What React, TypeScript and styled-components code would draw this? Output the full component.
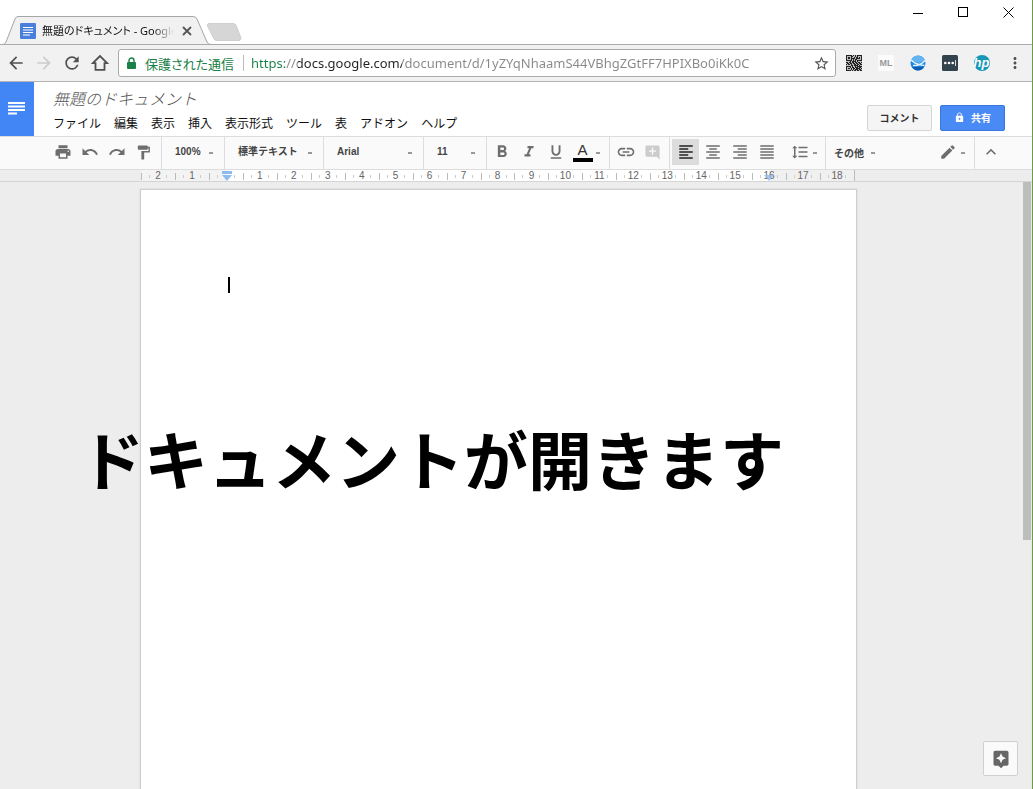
import React from "react";
import styled, { createGlobalStyle, css } from "styled-components";
import {
  MdAddComment,
  MdArrowBack,
  MdArrowForward,
  MdAssistant,
  MdEdit,
  MdFormatAlignCenter,
  MdFormatAlignJustify,
  MdFormatAlignLeft,
  MdFormatAlignRight,
  MdFormatBold,
  MdFormatItalic,
  MdFormatLineSpacing,
  MdFormatPaint,
  MdFormatUnderlined,
  MdKeyboardArrowUp,
  MdLink,
  MdLock,
  MdMoreVert,
  MdPrint,
  MdRedo,
  MdRefresh,
  MdStarBorder,
  MdUndo,
} from "react-icons/md";

const GlobalStyle = createGlobalStyle`
  *, *::before, *::after { box-sizing: border-box; }
  body {
    margin: 0;
    background: #fff;
    color: #111;
    font-family: "Liberation Sans", "Noto Sans CJK JP", sans-serif;
    font-size: 12px;
  }
  button, input, select { font: inherit; color: inherit; padding: 0; margin: 0; border: 0; background: none; }
  svg { display: block; flex: none; }
`;

const Window = styled.div`
  display: flex;
  flex-direction: column;
  min-height: 100vh;
  border-right: 1px solid #6f9a4c;
  overflow: hidden;
`;

/* ---------- browser chrome ---------- */

const TabStrip = styled.header`
  display: flex;
  align-items: flex-end;
  height: 45px;
  border-bottom: 1px solid #aaa;
`;

const Tab = styled.div`
  position: relative;
  display: flex;
  align-items: center;
  gap: 6px;
  width: 211px;
  height: 29px;
  margin-bottom: -1px;
  padding: 0 17px 0 20px;
`;

const TabShape = styled.svg`
  position: absolute;
  inset: 0;
  z-index: -1;
`;

const TabTitle = styled.span`
  flex: 1;
  min-width: 0;
  white-space: nowrap;
  font-family: "Noto Sans", "Noto Sans CJK JP", sans-serif;
  font-size: 11px;
  font-feature-settings: "palt";
  line-height: 20px;
  mask-image: linear-gradient(to right, #000 84%, transparent);
`;

const NewTab = styled.button`
  display: flex;
  margin-bottom: 3px;
  margin-left: -4px;
`;

const PlainButton = styled.button`
  display: flex;
  align-items: center;
  justify-content: center;
`;

const WindowButtons = styled.div`
  display: flex;
  align-self: flex-start;
  margin-left: auto;
  padding-right: 1px;
`;

const WindowButton = styled(PlainButton)`
  width: 45px;
  height: 24px;
`;

const AddressRow = styled.div`
  display: flex;
  align-items: center;
  height: 37px;
  padding: 0 8px 0 2px;
  background: #f1f1f1;
  border-bottom: 1px solid #b4b4b4;
`;

const NavButton = styled(PlainButton)<{ $dim?: boolean }>`
  width: 28px;
  height: 28px;
  color: ${(p) => (p.$dim ? "#ccc" : "#505050")};
`;

const Omnibox = styled.div`
  display: flex;
  align-items: center;
  flex: 1;
  min-width: 0;
  height: 28px;
  margin: 0 10px 0 4px;
  padding: 0 5px 0 8px;
  background: #fff;
  border: 1px solid #aaa;
  border-radius: 3px;
  font-size: 13px;
  font-family: "Noto Sans", "Noto Sans CJK JP", sans-serif;
`;

const Secure = styled.span`
  margin: 0 9px;
  color: #1a8046;
  font-feature-settings: "palt";
  white-space: nowrap;
`;

const UrlInput = styled.input`
  flex: 1;
  min-width: 0;
  height: 24px;
  margin-left: 7px;
  outline: 0;
  color: #777;
  background: linear-gradient(to right, #1a8046 34px, #888 34px 47px, #222 47px 151px, #888 151px);
  background-clip: text;
  -webkit-text-fill-color: transparent;
`;

const OmniDivider = styled.span`
  width: 1px;
  height: 16px;
  background: #bbb;
`;

const Extensions = styled.div`
  display: flex;
  align-items: center;
  gap: 16px;
`;

const ExtButton = styled(PlainButton)`
  width: 16px;
  height: 16px;
`;

const MlBadge = styled(ExtButton)`
  background: #fbfbfb;
  color: #999;
  font-size: 9px;
  font-weight: bold;
`;

const HpBadge = styled(ExtButton)`
  padding: 0 1px 1px 0;
  border-radius: 50%;
  background: #1696b8;
  color: #fff;
  font-family: "Liberation Sans", sans-serif;
  font-size: 13px;
  font-style: italic;
  font-weight: bold;
  line-height: 14px;
`;

/* ---------- document header ---------- */

const DocHeader = styled.div`
  display: flex;
  height: 54px;
  padding-right: 27px;
  background: #fff;
`;

const HomeLink = styled.a`
  display: flex;
  align-items: center;
  justify-content: center;
  width: 34px;
  background: #4285f4;
`;

const TitleBlock = styled.div`
  flex: 1;
  min-width: 0;
  padding: 4px 0 0 19px;
  font-family: "Noto Sans CJK JP", sans-serif;
`;

const TitleInput = styled.input`
  display: block;
  width: 220px;
  height: 23px;
  margin-bottom: 2px;
  color: #555;
  font-size: 16px;
  font-style: italic;
  font-weight: 300;
`;

const MenuBar = styled.nav`
  display: flex;
  gap: 13px;
`;

const MenuButton = styled.button`
  line-height: 24px;
  white-space: nowrap;
`;

const Actions = styled.div`
  display: flex;
  align-items: flex-end;
  gap: 8px;
  padding-bottom: 5px;
`;

const ActionButton = styled(PlainButton)<{ $primary?: boolean }>`
  gap: 6px;
  width: 65px;
  height: 26px;
  padding-bottom: 1px;
  border: 1px solid #d5d5d5;
  border-radius: 2px;
  background: #f5f5f5;
  color: #333;
  font-size: 10px;
  font-weight: bold;
  white-space: nowrap;
  ${(p) =>
    p.$primary &&
    css`
      border-color: #3a76e0;
      background: #4a8af4;
      color: #fff;
    `}
`;

/* ---------- toolbar ---------- */

const Toolbar = styled.div`
  display: flex;
  height: 34px;
  padding-left: 49px;
  background: #fafafa;
  border-top: 1px solid #ddd;
  border-bottom: 1px solid #ddd;
  color: #6e6e6e;
`;

const Group = styled.div<{ $width?: number; $pad?: number; $last?: boolean; $push?: boolean }>`
  display: flex;
  align-items: center;
  flex: none;
  width: ${(p) => (p.$width ? `${p.$width}px` : "auto")};
  padding-left: ${(p) => p.$pad ?? 0}px;
  padding-bottom: 2px;
  border-right: ${(p) => (p.$last ? "0" : "1px solid #ddd")};
  margin-left: ${(p) => (p.$push ? "auto" : "0")};
`;

const ToolButton = styled(PlainButton)<{ $on?: boolean; $faint?: boolean; $gap?: boolean }>`
  width: 27px;
  height: 26px;
  margin-left: ${(p) => (p.$gap ? "6px" : "0")};
  background: ${(p) => (p.$on ? "#dcdcdc" : "none")};
  color: ${(p) => (p.$on ? "#222" : p.$faint ? "#ccc" : "inherit")};
`;

const Caret = styled.span`
  flex: none;
  width: 4px;
  height: 2px;
  margin-top: 2px;
  background: #999;
`;

const SelectBox = styled.label`
  display: flex;
  align-items: center;
  flex: 1;
  padding-right: 11px;
`;

const Select = styled.select`
  flex: 1;
  min-width: 0;
  appearance: none;
  color: #444;
  font-size: 10px;
  font-weight: bold;
  line-height: 20px;
`;

const MoreButton = styled(PlainButton)`
  gap: 7px;
  color: #444;
  font-size: 10px;
  font-weight: bold;
`;

const ColorLetter = styled.span`
  width: 20px;
  border-bottom: 4px solid #000;
  color: #333;
  font-size: 15px;
  line-height: 16px;
`;

/* ---------- ruler and page ---------- */

const Canvas = styled.main`
  position: relative;
  display: flex;
  flex: 1;
  flex-direction: column;
  background: #ededed;
`;

const RulerBar = styled.div`
  display: flex;
  justify-content: center;
  height: 12px;
  padding-right: 36px;
  border-bottom: 1px solid #d4d4d4;
`;

const Ruler = styled.div`
  position: relative;
  display: flex;
  width: 714px;
  background: linear-gradient(to right, #f3f3f3 86px, #fff 86px 628px, #f0f0f0 628px);
  border-right: 1px solid #bbb;
`;

const RulerCell = styled.span`
  flex: 1;
  height: 11px;
  color: #666;
  font-size: 10px;
  line-height: 12px;
  text-align: center;
  background:
    linear-gradient(#bbb, #bbb) 0 3px / 1px 7px no-repeat,
    linear-gradient(#ccc, #ccc) 8px 5px / 1px 3px no-repeat,
    linear-gradient(#ccc, #ccc) 25px 5px / 1px 3px no-repeat;
`;

const IndentMarker = styled.svg<{ $at: number }>`
  position: absolute;
  top: 0;
  left: ${(p) => p.$at}px;
`;

const Desk = styled.div`
  display: flex;
  flex: 1;
  justify-content: center;
  padding: 7px 36px 0 0;
`;

const Page = styled.article`
  width: 717px;
  padding: 87px;
  background: #fff;
  border: 1px solid #cfcfcf;
  border-bottom: 0;
  box-shadow: 0 0 2px #ccc;
`;

const TextCursor = styled.div`
  width: 2px;
  height: 16px;
  background: #000;
`;

const Scrollbar = styled.div`
  position: absolute;
  top: 12px;
  right: 0;
  bottom: 0;
  width: 9px;
  border-right: 1px solid #e6ece2;
`;

const Thumb = styled.div`
  height: 59%;
  background: #bcbebc;
`;

const Caption = styled.p`
  position: absolute;
  top: 255px;
  left: 80px;
  margin: 0;
  color: #000;
  font-family: "Noto Sans CJK JP", sans-serif;
  font-size: 64px;
  font-weight: bold;
  line-height: 64px;
  white-space: nowrap;
`;

const ExploreButton = styled(PlainButton)`
  position: absolute;
  right: 14px;
  bottom: 13px;
  width: 35px;
  height: 35px;
  background: #fafafa;
  border: 1px solid #d0d0d0;
  border-radius: 2px;
  color: #666;
`;

const menus = ["ファイル", "編集", "表示", "挿入", "表示形式", "ツール", "表", "アドオン", "ヘルプ"];
const rulerMarks = ["2", "1", "", ...Array.from({ length: 18 }, (_, i) => String(i + 1))];

function Dropdown({ label, value }: { label: string; value: string }) {
  return (
    <SelectBox>
      <Select aria-label={label} defaultValue={value}>
        <option>{value}</option>
      </Select>
      <Caret />
    </SelectBox>
  );
}

/* Rows of a 16 by 16 code, one bit for each module. */
const qrRows = [
  0xfd5f, 0x8651, 0xb4b5, 0xb7bd, 0x8561, 0xfd5f, 0x0bd0, 0xdb6d, 0x6db6, 0xb4db, 0x06f4, 0xfa5f, 0x8b76, 0xb5bd, 0x8576,
  0xfadb,
];

function QrIcon() {
  return (
    <svg width="16" height="16" viewBox="0 0 16 16" fill="#222" shapeRendering="crispEdges">
      <rect width="16" height="16" fill="#bbb" />
      {qrRows.flatMap((row, y) =>
        Array.from({ length: 16 }, (_, x) =>
          (row >> (15 - x)) & 1 ? <rect key={`${x}-${y}`} x={x} y={y} width="1" height="1" /> : null
        )
      )}
    </svg>
  );
}

export default function App() {
  return (
    <Window>
      <GlobalStyle />
      <TabStrip>
        <Tab>
          <TabShape width="211" height="29" viewBox="0 0 211 29">
            <path
              d="M0 28.5H3Q5 28 6 26L15 3Q16 .5 18 .5H193Q196 .5 197 3L207 26Q208 28.5 211 28.5V29H0Z"
              fill="#f1f1f1"
            />
            <path
              d="M0 28.5H3Q5 28 6 26L15 3Q16 .5 18 .5H193Q196 .5 197 3L207 26Q208 28.5 211 28.5"
              fill="none"
              stroke="#a6a6a6"
            />
          </TabShape>
          <svg width="16" height="16" viewBox="0 0 16 16">
            <rect width="16" height="16" rx="1" fill="#4a80dc" />
            <path d="M3 4.5h10M3 7h10M3 9.5h10M3 12h7" stroke="#fff" strokeWidth="1.2" />
          </svg>
          <TabTitle>無題のドキュメント - Google</TabTitle>
          <PlainButton aria-label="タブを閉じる">
            <svg width="14" height="10" viewBox="0 0 14 10">
              <path d="M3 1l8 8M11 1l-8 8" stroke="#555" strokeWidth="1.8" />
            </svg>
          </PlainButton>
        </Tab>
        <NewTab aria-label="新しいタブ">
          <svg width="36" height="18" viewBox="0 0 36 18">
            <path d="M2 .5H26Q28 .5 29 2L34 15Q34 17.5 32 17.5H10Q8 17.5 7 16L.5 3Q0 .5 2 .5Z" fill="#d6d6d6" stroke="#cfcfcf" />
          </svg>
        </NewTab>
        <WindowButtons>
          <WindowButton aria-label="最小化">
            <svg width="11" height="11" viewBox="0 0 11 11">
              <path d="M0 6.5h10" stroke="#000" />
            </svg>
          </WindowButton>
          <WindowButton aria-label="最大化">
            <svg width="11" height="11" viewBox="0 0 11 11">
              <rect x=".5" y=".5" width="9" height="9" fill="none" stroke="#000" />
            </svg>
          </WindowButton>
          <WindowButton aria-label="閉じる">
            <svg width="11" height="11" viewBox="0 0 11 11">
              <path d="M.5 .5l10 10M10.500 .5l-10 10" stroke="#000" />
            </svg>
          </WindowButton>
        </WindowButtons>
      </TabStrip>

      <AddressRow>
        <NavButton aria-label="戻る">
          <MdArrowBack size={20} />
        </NavButton>
        <NavButton aria-label="進む" $dim>
          <MdArrowForward size={20} />
        </NavButton>
        <NavButton aria-label="再読み込み">
          <MdRefresh size={20} />
        </NavButton>
        <NavButton aria-label="ホーム">
          <svg width="18" height="18" viewBox="0 0 18 18">
            <path d="M9 2L1.800 9.200H4.500V15.800H13.500V9.200H16.200Z" fill="none" stroke="currentColor" strokeWidth="1.8" />
          </svg>
        </NavButton>
        <Omnibox>
          <svg width="9" height="12" viewBox="0 0 9 12">
            <rect y="5" width="9" height="7" rx="1" fill="#1a8046" />
            <path d="M2 5V3.500a2.500 2.500 0 0 1 5 0V5" fill="none" stroke="#1a8046" strokeWidth="1.4" />
          </svg>
          <Secure>保護された通信</Secure>
          <OmniDivider />
          <UrlInput
            aria-label="アドレス"
            defaultValue="https://docs.google.com/document/d/1yZYqNhaamS44VBhgZGtFF7HPIXBo0iKk0C"
          />
          <PlainButton aria-label="ブックマーク">
            <MdStarBorder size={17} color="#555" />
          </PlainButton>
        </Omnibox>
        <Extensions>
          <ExtButton aria-label="QR">
            <QrIcon />
          </ExtButton>
          <MlBadge>ML</MlBadge>
          <ExtButton aria-label="ブラウザ">
            <svg width="16" height="16" viewBox="0 0 16 16">
              <circle cx="8" cy="8" r="7.500" fill="#1d84dc" />
              <path d="M1 5.500A7.500 7.500 0 0 1 15 5.500L9 8Z" fill="#62b5f2" />
              <path d="M1 5C4 8 9 10 14.500 10.500M15 5.500C12 9 8 11 3 10.500" fill="none" stroke="#dff2ff" strokeWidth="1.5" />
              <path d="M2 11.500Q8 12.500 14 11.500Q12 15.500 8 15.500T2 11.500" fill="#0d5cb4" />
            </svg>
          </ExtButton>
          <ExtButton aria-label="パスワード">
            <svg width="16" height="16" viewBox="0 0 16 16">
              <rect width="16" height="16" rx="1.500" fill="#33434d" />
              <circle cx="3.300" cy="8" r="1.300" fill="#fff" />
              <circle cx="7" cy="8" r="1.300" fill="#fff" />
              <circle cx="10.700" cy="8" r="1.300" fill="#fff" />
              <path d="M13.500 5v6" stroke="#ddd" />
            </svg>
          </ExtButton>
          <HpBadge>hp</HpBadge>
          <PlainButton aria-label="メニュー">
            <MdMoreVert size={18} color="#505050" />
          </PlainButton>
        </Extensions>
      </AddressRow>

      <DocHeader>
        <HomeLink href="#" aria-label="ドキュメント ホーム">
          <svg width="18" height="14" viewBox="0 0 18 14">
            <path d="M0 1h17M0 4.500h17M0 8h17M0 11.500h9" stroke="#fff" strokeWidth="1.8" />
          </svg>
        </HomeLink>
        <TitleBlock>
          <TitleInput aria-label="ドキュメント名" defaultValue="無題のドキュメント" />
          <MenuBar>
            {menus.map((m) => (
              <MenuButton key={m}>{m}</MenuButton>
            ))}
          </MenuBar>
        </TitleBlock>
        <Actions>
          <ActionButton>コメント</ActionButton>
          <ActionButton $primary>
            <MdLock size={11} />
            共有
          </ActionButton>
        </Actions>
      </DocHeader>

      <Toolbar>
        <Group $width={113}>
          <ToolButton aria-label="印刷"><MdPrint size={18} /></ToolButton>
          <ToolButton aria-label="元に戻す"><MdUndo size={18} /></ToolButton>
          <ToolButton aria-label="やり直し"><MdRedo size={18} /></ToolButton>
          <ToolButton aria-label="書式を貼り付け"><MdFormatPaint size={17} /></ToolButton>
        </Group>
        <Group $width={63} $pad={13}><Dropdown label="ズーム" value="100%" /></Group>
        <Group $width={99} $pad={13}><Dropdown label="スタイル" value="標準テキスト" /></Group>
        <Group $width={100} $pad={13}><Dropdown label="フォント" value="Arial" /></Group>
        <Group $width={63} $pad={13}><Dropdown label="フォントサイズ" value="11" /></Group>
        <Group $width={123} $pad={1}>
          <ToolButton aria-label="太字"><MdFormatBold size={20} /></ToolButton>
          <ToolButton aria-label="斜体"><MdFormatItalic size={18} /></ToolButton>
          <ToolButton aria-label="下線"><MdFormatUnderlined size={18} /></ToolButton>
          <ToolButton aria-label="テキストの色"><ColorLetter>A</ColorLetter></ToolButton>
          <Caret />
        </Group>
        <Group $width={60} $pad={2}>
          <ToolButton aria-label="リンク"><MdLink size={20} /></ToolButton>
          <ToolButton aria-label="コメントを追加" $faint><MdAddComment size={17} /></ToolButton>
        </Group>
        <Group $width={156} $pad={2}>
          <ToolButton aria-label="左揃え" $on><MdFormatAlignLeft size={18} /></ToolButton>
          <ToolButton aria-label="中央揃え"><MdFormatAlignCenter size={18} /></ToolButton>
          <ToolButton aria-label="右揃え"><MdFormatAlignRight size={18} /></ToolButton>
          <ToolButton aria-label="両端揃え"><MdFormatAlignJustify size={18} /></ToolButton>
          <ToolButton aria-label="行間" $gap><MdFormatLineSpacing size={18} /></ToolButton>
          <Caret />
        </Group>
        <Group $pad={8} $last>
          <MoreButton>その他<Caret /></MoreButton>
        </Group>
        <Group $width={41} $push>
          <ToolButton aria-label="編集モード"><MdEdit size={18} /></ToolButton>
          <Caret />
        </Group>
        <Group $width={57} $pad={2} $last>
          <ToolButton aria-label="メニューを隠す"><MdKeyboardArrowUp size={20} /></ToolButton>
        </Group>
      </Toolbar>

      <Canvas>
        <RulerBar>
          <Ruler>
            {rulerMarks.map((n, i) => (
              <RulerCell key={i}>{n}</RulerCell>
            ))}
            <IndentMarker $at={81} width="10" height="11" viewBox="0 0 10 11" fill="#8fbcf0">
              <path d="M0 1h10v3H0zM0 5h10L5 11z" />
            </IndentMarker>
            <IndentMarker $at={623} width="10" height="11" viewBox="0 0 10 11" fill="#8fbcf0" fillOpacity=".8">
              <path d="M0 5h10L5 11z" />
            </IndentMarker>
          </Ruler>
        </RulerBar>
        <Desk>
          <Page>
            <TextCursor />
          </Page>
        </Desk>
        <Scrollbar>
          <Thumb />
        </Scrollbar>
        <Caption>ドキュメントが開きます</Caption>
        <ExploreButton aria-label="データ探索">
          <MdAssistant size={20} />
        </ExploreButton>
      </Canvas>
    </Window>
  );
}
